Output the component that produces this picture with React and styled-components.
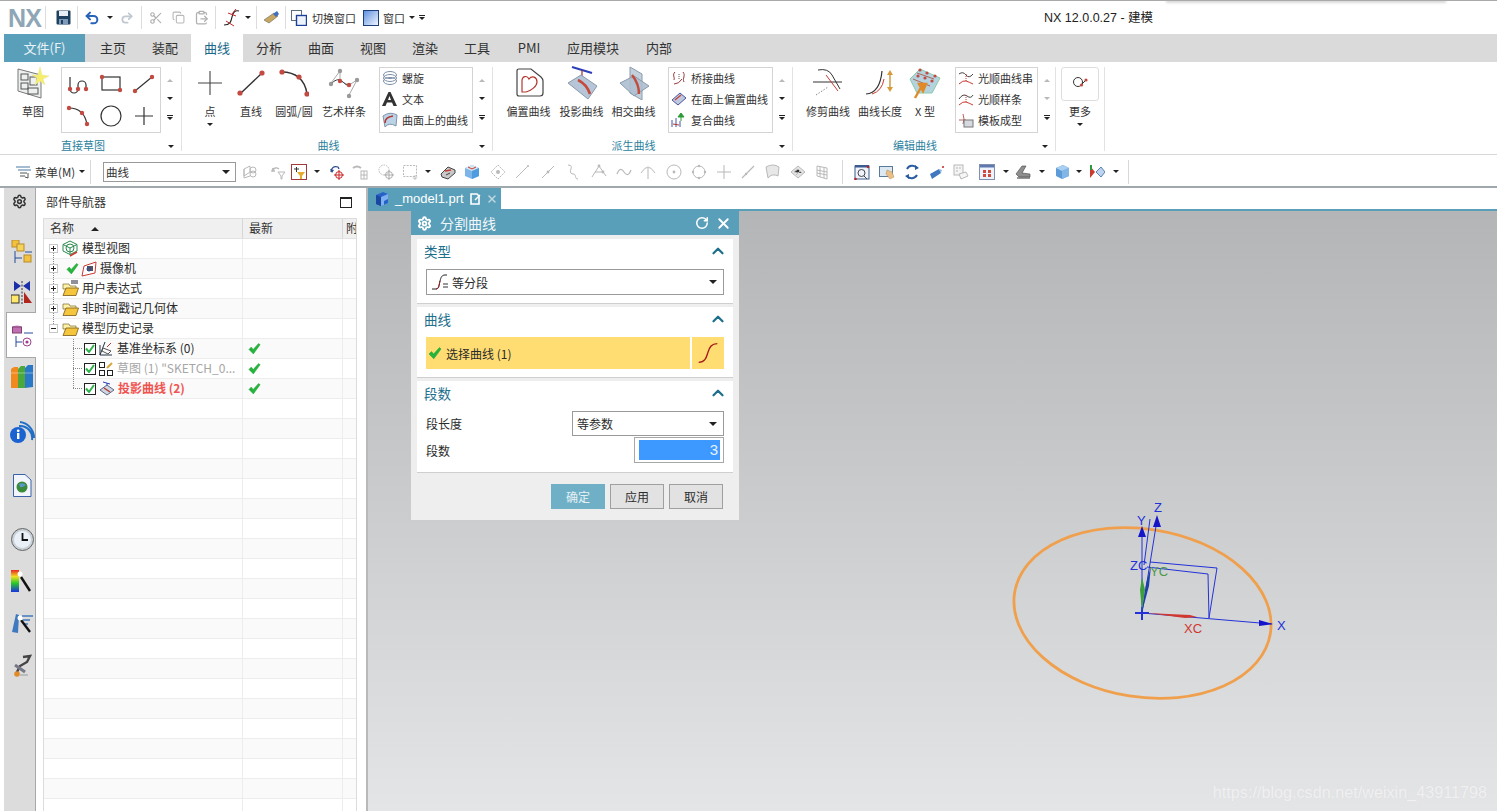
import React from 'react';
import styled, { createGlobalStyle } from 'styled-components';
import { Scissors, Copy, ClipboardPaste, Redo2, Undo2, RotateCw, X, ChevronUp, Settings } from 'lucide-react';

const Global = createGlobalStyle`
  html, body { margin: 0; padding: 0; height: 100%; overflow: hidden; background: #fff; }
  #root { height: 811px; }
  * { box-sizing: border-box; }
  body { font-family: "Noto Sans CJK SC", "Liberation Sans", sans-serif; color: #2b2b2b; font-size: 11px; }
  svg { display: block; flex: none; }
`;

const Page = styled.div`
  width: 1497px; height: 811px; display: flex; flex-direction: column; overflow: hidden;
  border-top: 1px solid #a9a9a9; position: relative;
`;
const TopShadow = styled.div`
  position: absolute; left: 1166px; top: -1px; width: 280px; height: 1px; background: #6a6a6a;
  box-shadow: 0 1px 3px rgba(0,0,0,.45);
`;
const TitleBar = styled.div`height: 33px; display: flex; align-items: center; padding-left: 8px; position: relative;`;
const Logo = styled.div`
  font: bold 25px "Liberation Sans", sans-serif; color: #8fa6b6; width: 37px; letter-spacing: -0.8px; line-height: 32px;
`;
const QSep = styled.div`width: 1px; height: 23px; background: #dcdcdc; margin: 0 ${p => p.$r}px 0 ${p => p.$l}px; flex: none;`;
const QIcon = styled.div`
  width: ${p => p.$w ?? 16}px; height: 18px; display: flex; align-items: center; justify-content: center;
  margin: 0 ${p => p.$mr ?? 0}px 0 ${p => p.$ml ?? 0}px; flex: none;
`;
const Caret = styled.span`
  display: inline-block; flex: none; width: 0; height: 0;
  border-left: 3px solid transparent; border-right: 3px solid transparent; border-top: 3px solid #222;
  margin: 0 ${p => p.$r ?? 0}px 0 ${p => p.$l ?? 0}px;
`;
const DropCaret = styled(Caret)`border-width: 4px 4px 0;`;
const DownCaret = styled(Caret)`margin-top: 5px;`;
const CaretBar = styled.span`
  display: inline-flex; flex: none; flex-direction: column; align-items: center; gap: 1px; margin-left: ${p => p.$l ?? 0}px;
  &::before { content: ""; width: 6px; height: 1px; background: #222; }
  &::after { content: ""; width: 0; height: 0; border-left: 3px solid transparent; border-right: 3px solid transparent; border-top: 3px solid #222; }
`;
const QText = styled.span`font-size: 11px; margin-right: ${p => p.$m ?? 0}px; white-space: nowrap; color: #333;`;
const WinTitle = styled.div`
  position: absolute; left: 1044px; top: 9px; font-size: 12.5px; color: #222; white-space: nowrap; line-height: 16px;
  font-family: "Liberation Sans", "Noto Sans CJK SC", sans-serif;
`;

const TabBar = styled.div`height: 28px; margin-left: 4px; background: #dadada; display: flex; flex: none;`;
const FileTab = styled.div`
  width: 81px; margin-right: 2px; padding-bottom: 2px; background: #5a9fb9; color: #e9f2f6; display: flex; align-items: center; justify-content: center; font-size: 13px;
`;
const Tab = styled.div`
  width: ${p => p.$w ?? 52}px; padding-bottom: 2px; display: flex; align-items: center; justify-content: center; color: ${p => p.$on ? '#17688a' : '#333'};
  background: ${p => p.$on ? '#fff' : 'transparent'}; font-size: 13px;
`;

const Ribbon = styled.div`height: 93px; display: flex; padding-left: 4px; border-bottom: 1px solid #d8d8d8; flex: none;`;
const Group = styled.div`
  width: ${p => p.$w}px; flex: none; display: flex; flex-direction: column; position: relative;
`;
const GroupEnd = styled.div`
  position: absolute; right: 0; top: 5px; bottom: 3px; width: 1px; background: #e2e2e2;
`;
const GroupBody = styled.div`height: 75px; display: flex; padding-top: 5px; padding-left: ${p => p.$pl ?? 0}px;`;
const GroupLabel = styled.div`
  height: 17px; text-align: center; font-size: 11px; color: #2b7f9d; line-height: 16px; padding-right: ${p => p.$pr ?? 0}px;
`;
const Corner = styled(Caret)`position: absolute; right: 8px; bottom: 6px;`;
const Big = styled.div`
  width: ${p => p.$w ?? 52}px; flex: none; display: flex; flex-direction: column; align-items: center; font-size: 11px; white-space: nowrap; color: #333;
`;
const BigIcon = styled.div`height: 32px; width: 100%; display: flex; align-items: center; justify-content: center; margin-bottom: 5px;`;
const BigText = styled.div`line-height: 14px; height: 14px;`;
const Gallery = styled.div`
  width: ${p => p.$w}px; height: 66px; flex: none; border: 1px solid #d4d4d4; margin-left: ${p => p.$ml ?? 0}px;
  padding-bottom: ${p => p.$grid ? 0 : 2}px;
  display: ${p => p.$grid ? 'grid' : 'flex'}; flex-direction: column; grid-template-columns: repeat(3, 1fr); grid-template-rows: 1fr 1fr; place-items: center; justify-content: space-around;
`;
const GalRow = styled.div`
  display: flex; align-items: center; gap: 4px; width: 100%; padding-left: 2px; height: 20px; font-size: 11px; white-space: nowrap; color: #333;
`;
const Spin = styled.div`
  width: 17px; flex: none; height: 66px; display: flex; flex-direction: column; align-items: center; justify-content: space-around; padding: 4px 0 6px;
`;
const CaretUp = styled.span`
  width: 0; height: 0; border-left: 3px solid transparent; border-right: 3px solid transparent; border-bottom: 3px solid #b8b8b8;
`;
const CaretOff = styled(Caret)`border-top-color: #b8b8b8;`;
const MoreBox = styled.div`
  width: 38px; height: 34px; border: 1px solid #dedede; border-radius: 3px; margin: 0 0 3px; display: flex; align-items: center; justify-content: center;
`;
const MoreCol = styled(Big)`width: 48px;`;

const Toolbar = styled.div`
  height: 33px; flex: none; display: flex; align-items: center; padding: 2px 0 0 14px; border-bottom: 2px solid #9fa9ad;
`;
const MenuBtn = styled.div`display: flex; align-items: center; gap: 3px; width: 71px; font-size: 11.5px; color: #333; white-space: nowrap;`;
const TSep = styled.div`width: 1px; height: 24px; background: #d8d8d8; margin: 0 ${p => p.$r ?? 0}px 0 ${p => p.$l ?? 0}px; flex: none;`;
const FilterSelect = styled.div`
  width: 133px; height: 20px; border: 1px solid #9a9a9a; display: flex; align-items: center; justify-content: space-between; padding: 0 5px 0 2px;
  font-size: 11.5px; color: #333; flex: none;
`;
const TIcon = styled.div`width: 16px; height: 18px; flex: none; display: flex; align-items: center; justify-content: center; margin-left: ${p => p.$ml}px; opacity: ${p => p.$off ? .8 : 1};`;
const TCaret = styled(Caret)`margin: 0 0 0 ${p => p.$ml}px;`;

const Main = styled.div`flex: 1; display: flex; min-height: 0;`;
const SideBar = styled.div`
  width: 32px; margin-left: 4px; background: #dcdcdc; border-right: 1px solid #a8a8a8; display: flex; flex-direction: column;
  flex: none;
`;
const SideBtn = styled.div`
  width: 31px; height: ${p => p.$h ?? 36}px; margin-top: ${p => p.$mt ?? 0}px; display: flex; align-items: center; justify-content: center; flex: none;
  padding-left: ${p => p.$pl ?? 5}px;
  ${p => p.$on ? 'background:#fff; border:1px solid #a8a8a8; border-right:0; margin-left: 2px; width: 30px; padding-left: 2px; padding-top: 3px; z-index: 1;' : ''}
`;
const Nav = styled.div`width: 332px; flex: none; display: flex; flex-direction: column; padding: 0 9px 0 7px; border-right: 2px solid #b9b9b9;`;
const NavHead = styled.div`
  height: 30px; flex: none; display: flex; align-items: center; justify-content: space-between; padding: 0 5px 3px 3px; font-size: 12px; color: #333;
`;
const MaxBtn = styled.div`width: 12px; height: 11px; border: 1px solid #222; border-top-width: 2px; margin-top: 2px;`;
const Tree = styled.div`flex: 1; border: 1px solid #dcdcdc; border-bottom: 0; display: flex; flex-direction: column; overflow: hidden;`;
const HeadRow = styled.div`display: grid; flex: none; grid-template-columns: 199px 100px 14px; height: 20px; background: #f0f0f0; border-bottom: 1px solid #e2e2e2; font-size: 12px; color: #333;`;
const HeadCell = styled.div`
  display: flex; align-items: center; padding: 0 0 2px 6px; border-right: 1px solid #d6d6d6; overflow: hidden; gap: 17px; white-space: nowrap;
  &:last-child { border-right: 0; padding-left: 3px; }
`;
const SortUp = styled.span`width: 0; height: 0; border-left: 4px solid transparent; border-right: 4px solid transparent; border-bottom: 4px solid #222; margin-top: 2px;`;
const Row = styled.div`
  display: grid; grid-template-columns: 199px 100px 14px; height: 20px; flex: none; border-bottom: 1px solid #ededed;
  background: ${p => p.$alt ? '#fafafa' : '#fff'};
`;
const Cell = styled.div`
  position: relative; display: flex; align-items: center; border-right: 1px solid #ededed; min-width: 0; padding-left: ${p => p.$pl ?? 0}px;
  white-space: nowrap; font-size: 12px;
  &:last-child { border-right: 0; }
`;
const Expander = styled.span`
  width: 9px; height: 9px; border: 1px solid #c8c8c8; background: #fff; margin: 0 4px 0 5px; position: relative; flex: none; z-index: 1;
  &::before { content: ""; position: absolute; left: 1px; right: 1px; top: 3px; height: 1px; background: #222; }
  &::after { content: ${p => p.$open ? 'none' : '""'}; position: absolute; top: 1px; bottom: 1px; left: 3px; width: 1px; background: #222; }
`;
const VDots = styled.i`
  position: absolute; left: ${p => p.$x}px; top: ${p => p.$t ?? 0}px; bottom: ${p => p.$b ?? 0}px; width: 0; border-left: 1px dotted #888;
`;
const HDots = styled.i`width: 9px; flex: none; border-top: 1px dotted #888; margin-right: 2px; margin-left: 29px;`;
const Box = styled.span`
  width: 12px; height: 12px; border: 1px solid #222; background: #fff; display: flex; align-items: center; justify-content: center; flex: none; margin-right: 3px;
`;
const RowText = styled.span`
  margin: 0 0 2px ${p => p.$ml ?? 3}px; color: ${p => p.$c ?? '#2b2b2b'}; font-weight: ${p => p.$b ? 700 : 400};
`;
const Spacer = styled.span`width: ${p => p.$w}px; flex: none;`;

const Work = styled.div`flex: 1; display: flex; flex-direction: column; position: relative; min-width: 0;`;
const DocStrip = styled.div`height: 23px; display: flex; border-bottom: 2px solid #5a9fb9; flex: none;`;
const DocTab = styled.div`
  width: 133px; height: 21px; background: #5a9fb9; color: #fff; display: flex; align-items: center; padding-left: 6px; gap: 5px;
  font: 13px "Liberation Sans", sans-serif;
`;
const Viewport = styled.div`flex: 1; background: linear-gradient(#b4b5b7 0%, #c4c5c7 35%, #e4e5e7 100%); position: relative;`;
const Drawing = styled.svg`position: absolute; left: 632px; top: 279px;`;
const Watermark = styled.div`
  position: absolute; right: 10px; bottom: 9px; font: 16.2px "Liberation Sans", sans-serif; color: #f0f0f1; white-space: nowrap;
  text-shadow: 0 0 1px #dadadc;
`;

const Dialog = styled.div`
  position: absolute; left: 43px; top: 0; width: 328px; height: 309px; background: #eeeeee; display: flex; flex-direction: column;
`;
const DlgHead = styled.div`
  height: 24px; background: #5a9fb9; color: #fff; display: flex; align-items: center; padding: 0 7px 0 6px; font-size: 14px; gap: 6px; flex: none;
`;
const DlgTitle = styled.span`flex: 1; margin-left: 2px; color: #f2f8fa;`;
const DlgBody = styled.div`flex: 1; padding: 4px 6px 0; display: flex; flex-direction: column; gap: 3px;`;
const Section = styled.div`
  height: ${p => p.$h}px; background: #fff; border-bottom: 1px solid #cfcfcf; padding: 0 9px 0 7px; flex: none;
`;
const SecHead = styled.div`
  height: 26px; margin: 0 -3px 4px 0; padding-bottom: 2px; display: flex; align-items: center; justify-content: space-between; color: #1d6f8d; font-size: 13.5px;
`;
const Combo = styled.div`
  height: ${p => p.$h}px; width: ${p => p.$w ? p.$w + 'px' : 'auto'}; border: 1px solid #9a9a9a; display: flex; align-items: center; justify-content: space-between; padding: 0 6px 0 4px;
  font-size: 12px; color: #2b2b2b; gap: 3px; margin-left: ${p => p.$ml ?? 2}px;
`;
const ComboLabel = styled.span`display: flex; align-items: center; gap: 3px; flex: 1;`;
const SelectBar = styled.div`display: flex; gap: 2px; height: 32px; margin: 0 0 0 2px;`;
const SelectMain = styled.div`flex: 1; background: #ffdd72; display: flex; align-items: center; padding-left: 2px; gap: 4px; font-size: 12px;`;
const SelectIcon = styled.div`width: 32px; background: #ffdd72; display: flex; align-items: center; justify-content: center;`;
const FormRow = styled.div`display: flex; align-items: center; justify-content: space-between; padding-left: 2px; font-size: 12px; height: ${p => p.$h}px; margin-top: ${p => p.$mt ?? 0}px;`;
const NumBox = styled.div`width: 90px; height: 26px; border: 1px solid #a8a8a8; padding: 2px 3px 2px 4px; display: flex;`;
const NumFill = styled.div`flex: 1; background: #3d99ff; color: #e6f2ff; text-align: right; padding-right: 2px; font: 15px/20px "Liberation Sans", sans-serif;`;
const DlgFoot = styled.div`display: flex; justify-content: flex-end; gap: 5px; padding: 8px 10px 0 0;`;
const Btn = styled.div`
  width: 54px; height: 25px; display: flex; align-items: center; justify-content: center; font-size: 12px;
  background: ${p => p.$primary ? '#70b0c7' : '#e2e2e2'}; color: ${p => p.$primary ? '#e6f1f5' : '#2b2b2b'};
  border: ${p => p.$primary ? '0' : '1px solid #a0a0a0'};
`;

const R = '#c24a42', K = '#333';
const Dot = ({ x, y, r = 2.2, c = R }) => <circle cx={x} cy={y} r={r} fill={c} />;
const Tick = ({ s = 14 }) => (
  <svg width={s} height={s} viewBox="0 0 14 14"><path d="M1 8 L3.5 5.5 L5.6 8 L11.5 1.5 L13 3 L5.8 12.8 Z" fill="#24b53c" stroke="#1a9a30" strokeWidth=".5" /></svg>
);
const Sv = ({ s = 16, w, h, v, children, ...rest }) => <svg width={w ?? s} height={h ?? s} viewBox={v ?? `0 0 ${w ?? s} ${h ?? s}`} {...rest}>{children}</svg>;

const Floppy = () => <Sv s={15}><rect x=".5" y=".5" width="14" height="14" rx="1" fill="#20405f" /><rect x="3" y="1" width="9" height="5" fill="#e8eef4" /><rect x="3" y="9" width="9" height="5.5" fill="#7d9ab8" /><rect x="5" y="10" width="2" height="4" fill="#20405f" /></Sv>;
const SplitCurve = () => <Sv s={20}><path d="M2 17 C8 17 9 14 10 9 S13 2 17 3" fill="none" stroke="#222" strokeWidth="1.2" /><path d="M6 5 L14 8 M4 13 L12 18 M14 1 L10 6" stroke="#c62828" strokeWidth="1" /></Sv>;
const Eraser = () => <Sv s={18}><path d="M2 11 L12 4 L16 7 L7 14 Z" fill="#c8a860" stroke="#665" strokeWidth=".6" /><path d="M11 5 L15 2 L17 5 L14 8 Z" fill="#3f6fc0" /></Sv>;
const SwitchWin = () => <Sv s={16}><rect x=".5" y=".5" width="10" height="10" fill="#fff" stroke="#5a6e80" /><rect x="5.5" y="5.5" width="10" height="10" fill="#eef3fb" stroke="#1c3f9a" strokeWidth="1.4" /></Sv>;
const WinIcon = () => <Sv s={16}><defs><linearGradient id="wg" x1="0" y1="0" x2="1" y2="1"><stop offset="0" stopColor="#5b8fe0" /><stop offset="1" stopColor="#f6f9ff" /></linearGradient></defs><rect x=".5" y=".5" width="15" height="15" fill="url(#wg)" stroke="#1c3f7a" /></Sv>;

const SketchI = () => <Sv w={32} h={32}><path d="M1 2 L24 8 L24 31 L1 24 Z" fill="#eef0f0" stroke="#777" /><rect x="4" y="7" width="7" height="6" fill="none" stroke="#555" /><rect x="13" y="10" width="7" height="8" fill="none" stroke="#555" /><rect x="4" y="16" width="7" height="6" fill="none" stroke="#555" /><rect x="11" y="21" width="10" height="6" fill="none" stroke="#555" /><path d="M23 0 L25 8 L32 9 L26 12 L28 18 L23 14 L18 18 L20 11 L15 8 L21 8 Z" fill="#f6ee6a" stroke="#e7e39a" strokeWidth=".5" /></Sv>;
const G1 = () => <Sv w={24} h={22}><path d="M4 4 V16 A4 4 0 0 0 12 16 V12 A4 4 0 0 1 20 12 V16" fill="none" stroke={K} strokeWidth="1.2" /><Dot x={4} y={16} /><Dot x={12} y={16} /><Dot x={20} y={16} /></Sv>;
const G2 = () => <Sv w={24} h={20}><rect x="3" y="3" width="18" height="13" fill="none" stroke={K} strokeWidth="1.2" /><Dot x={3} y={3} /><Dot x={21} y={16} /></Sv>;
const G3 = () => <Sv w={24} h={20}><path d="M3 17 L20 3" stroke={K} strokeWidth="1.2" /><Dot x={3} y={17} /><Dot x={20} y={3} /></Sv>;
const G4 = () => <Sv w={24} h={22}><path d="M3 3 C13 3 19 9 21 19" fill="none" stroke={K} strokeWidth="1.2" /><Dot x={3} y={3} /><Dot x={16} y={8} /><Dot x={21} y={19} /></Sv>;
const G5 = () => <Sv w={24} h={22}><circle cx="12" cy="11" r="10" fill="none" stroke={K} strokeWidth="1.2" /></Sv>;
const G6 = () => <Sv w={20} h={20}><path d="M1 10 H19 M10 1 V19" stroke={K} strokeWidth="1.2" /></Sv>;
const BigPlus = () => <Sv w={24} h={24}><path d="M0 12 H24 M12 0 V24" stroke="#444" strokeWidth="1.1" /></Sv>;
const BigLine = () => <Sv w={28} h={28}><path d="M4 24 L24 5" stroke={K} strokeWidth="1.4" /><Dot x={3} y={24} r={2.6} /><Dot x={25} y={4} r={2.6} /></Sv>;
const BigArc = () => <Sv w={30} h={28}><path d="M3 3 C16 3 26 10 28 25" fill="none" stroke={K} strokeWidth="1.4" /><Dot x={3} y={3} r={2.6} /><Dot x={20} y={8} r={2.6} /><Dot x={28} y={25} r={2.6} /></Sv>;
const BigSpline = () => <Sv w={32} h={32}><path d="M3 16 L12 4 L12 14 L21 18 L29 13 L21 28" fill="none" stroke="#aaa" /><path d="M4 16 C8 12 12 12 14 14 S20 20 22 18" fill="none" stroke={K} /><Dot x={12} y={4} c="#999" /><Dot x={3} y={17} c="#999" /><Dot x={29} y={13} c="#999" /><Dot x={21} y={29} c="#999" /><Dot x={12} y={14} /><Dot x={21} y={18} /></Sv>;
const HelixI = () => <Sv w={16} h={16}><g fill="none" stroke="#7c8fa8"><ellipse cx="8" cy="5" rx="6.5" ry="3.5" /><ellipse cx="8" cy="8" rx="6.5" ry="3.5" /><ellipse cx="8" cy="11" rx="6.5" ry="3.5" /></g></Sv>;
const TextA = () => <Sv w={16} h={16} style={{ overflow: 'visible' }}><path d="M0 15 L6.5 1 H8.5 L15 15 H11.5 L10 11.5 H5 L3.5 15 Z M6 9 H9 L7.5 5 Z" fill="#333" fillRule="evenodd" /></Sv>;
const OnSurface = () => <Sv w={16} h={16}><path d="M1 4 Q8 -1 15 3 L14 14 Q7 10 3 15 Z" fill="#bcd2e6" stroke="#7f95ab" /><path d="M3 11 Q3 5 11 4" fill="none" stroke="#b5362f" strokeWidth="1.6" /></Sv>;
const OffsetC = () => <Sv w={32} h={32}><path d="M4 11 L4 4 Q4 2 6 2 H18 L28 10 Q30 12 30 14 V26 Q30 29 27 29 H6 Q4 29 4 27 Z" fill="none" stroke="#444" strokeWidth="1.2" /><path d="M9 14 C9 9 14 8 16 12 C19 8 24 10 24 15 C24 19 18 24 13 25 H9 Z" fill="none" stroke="#b5362f" strokeWidth="1.2" /></Sv>;
const ProjectC = () => <Sv w={32} h={34}><path d="M6 1 L26 7" stroke="#2b3fb8" strokeWidth="2" /><path d="M16 4 V14" stroke="#a02c2c" strokeWidth="1.2" /><path d="M2 17 L15 9 L31 20 L22 33 Z" fill="#b6c6d8" stroke="#8a9aac" /><path d="M12 14 C18 17 22 22 24 28" fill="none" stroke="#c44a3a" strokeWidth="2.6" /></Sv>;
const IntersectC = () => <Sv w={32} h={34}><path d="M12 1 L24 8 V34 L12 27 Z" fill="#c2d0dc" stroke="#8a9aac" /><path d="M2 17 L16 10 L31 20 L16 30 Z" fill="#aebfd0" fillOpacity=".9" stroke="#8a9aac" /><path d="M14 9 C18 14 21 20 21 28" fill="none" stroke="#c44a3a" strokeWidth="2.4" /></Sv>;
const BridgeI = () => <Sv w={16} h={16}><path d="M4 2 C1 5 4 7 3 10 M12 2 C15 6 11 8 13 12 M3 14 Q8 14 11 9" fill="none" stroke="#9a3a38" /><path d="M8 4 V9" stroke="#555" strokeDasharray="1 1" /></Sv>;
const OnFaceI = () => <Sv w={16} h={16}><path d="M1 9 L9 2 L15 7 L7 14 Z" fill="#c0c8e0" stroke="#4a55a0" /><path d="M4 9 L10 4" stroke="#c44a3a" strokeWidth="1.4" /></Sv>;
const CompI = () => <Sv w={16} h={16}><path d="M1 15 V8 M5 15 V6 M9 15 V9" stroke="#3f57a8" /><path d="M10 9 V3 M7 5 L10 1 L13 5 Z" stroke="#2c9b36" fill="#2c9b36" /><path d="M2 12 L8 13" stroke="#b5362f" /></Sv>;
const TrimI = () => <Sv w={32} h={32}><path d="M1 15 H30" stroke="#333" /><path d="M6 3 Q16 1 20 8 T28 22" fill="none" stroke="#333" /><path d="M14 8 L26 24" stroke="#c93a32" /><path d="M4 28 Q10 24 16 20" fill="none" stroke="#888" strokeDasharray="1.5 1.5" /></Sv>;
const LenI = () => <Sv w={32} h={32}><path d="M2 27 Q16 26 18 4" fill="none" stroke="#333" strokeWidth="1.2" /><path d="M8 27 Q18 24 20 12" fill="none" stroke="#c93a32" /><path d="M26 6 V22" stroke="#c9963a" strokeWidth="1.4" /><path d="M23 8 L26 3 L29 8 Z M23 20 L26 25 L29 20 Z" fill="#d89a3a" /></Sv>;
const XformI = () => <Sv w={32} h={32}><path d="M1 12 L11 2 L31 11 L23 26 L8 26 Z" fill="#b5d2df" stroke="#8ca" /><path d="M8 6 L25 12 M4 12 L21 19" stroke="#b0645a" /><Dot x={11} y={3} r={1.6} /><Dot x={18} y={6} r={1.6} /><Dot x={26} y={9} r={1.6} /><Dot x={9} y={9} r={1.6} /><Dot x={16} y={11} r={1.6} /><Dot x={23} y={14} r={1.6} /><path d="M6 31 L14 17 M10 17 H17 L14 24 Z" stroke="#e08a28" strokeWidth="2.4" fill="#e08a28" /></Sv>;
const SmoothI = ({ v }) => <Sv w={16} h={16}><path d={v ? 'M1 8 Q5 2 9 5 T15 4' : 'M1 4 Q5 1 8 5 T15 4'} fill="none" stroke="#444" /><path d="M1 14 Q5 10 8 11 T15 14" fill="none" stroke="#c93a32" /><path d="M8 4 V11" stroke="#c93a32" strokeDasharray="1 1" /></Sv>;
const TemplI = () => <Sv w={16} h={16}><path d="M1 8 H8 M5 2 Q7 7 5 12" stroke="#b5625a" fill="none" /><rect x="6" y="8" width="9" height="7" fill="#d6dae0" stroke="#777" /></Sv>;
const MoreI = () => <Sv w={18} h={18}><circle cx="7" cy="7" r="4.5" fill="none" stroke="#333" /><path d="M10 10 L15 5" stroke="#333" /><Dot x={10.5} y={10} r={1.6} /><Dot x={15} y={5} r={1.6} /></Sv>;

const MenuI = () => <Sv w={18} h={14}><path d="M2 2 H16 M4 5 H17" stroke="#4a7aa6" strokeWidth="1.2" /><path d="M6 8 H13 M6 11 H11" stroke="#555" /><path d="M14 8 V13 L11 12" fill="none" stroke="#555" /></Sv>;
const gray = '#a8a8a8';
const T = {
  a: <Sv><path d="M2 5 L8 2 V8 L2 12 Z M2 5 V14 L8 12" fill="none" stroke={gray} /><circle cx="11" cy="6" r="3" fill="none" stroke={gray} /><circle cx="11" cy="10" r="3" fill="none" stroke={gray} /></Sv>,
  b: <Sv><path d="M2 7 Q5 2 9 5 M3 4 L2 7 L5 7" fill="none" stroke={gray} strokeWidth="1.4" /><path d="M8 8 H15 L12 12 V15 H11 V12 Z" fill="none" stroke={gray} /></Sv>,
  c: <Sv><rect x=".5" y=".5" width="15" height="15" fill="#fff" stroke="#a33a3a" /><path d="M3 5 H8 M5.5 3 V8" stroke="#333" /><path d="M6 8 H14 L11 12 V15 H9 V12 Z" fill="#e8ac2c" /></Sv>,
  d: <Sv><path d="M2 8 Q3 1 9 3 L10 5" fill="none" stroke="#2c4c8c" strokeWidth="1.3" /><path d="M1 5 L3 9 L5 6Z" fill="#2c4c8c" /><circle cx="10" cy="11" r="3.4" fill="none" stroke="#c22" /><path d="M5 11 H15 M10 6 V16" stroke="#c22" /></Sv>,
  e: <Sv><path d="M1 4 Q5 1 9 4" stroke={gray} strokeWidth="2" fill="none" /><rect x="9" y="7" width="6" height="8" fill="none" stroke={gray} /><path d="M9 11 H15 M12 7 V15" stroke={gray} /></Sv>,
  f: <Sv><circle cx="6" cy="6" r="5" fill="none" stroke={gray} strokeDasharray="1.5 1" /><circle cx="11" cy="11" r="3.5" fill="none" stroke="#999" /><path d="M6 11 H16 M11 6 V16" stroke="#999" /></Sv>,
  g: <Sv><rect x="1.5" y="1.5" width="13" height="11" fill="none" stroke={gray} strokeDasharray="2 1.2" /><path d="M13 11 V15 M11 13.5 L13 15.5 L15 13.5" fill="none" stroke={gray} /></Sv>,
  h: <Sv><path d="M1 10 L8 3 L15 6 L15 9 L8 15 L2 13 Z" fill="#c8c8c8" stroke="#444" /><path d="M5 7 L11 6" stroke="#c93a32" strokeWidth="1.4" /><path d="M6 11 L10 9" stroke="#444" /></Sv>,
  i: <Sv><path d="M1 4 L8 1 L15 4 V12 L8 15 L1 12 Z" fill="#7cb5e8" /><path d="M1 4 L8 7 L15 4 L8 1 Z" fill="#d8e6f0" /><path d="M4 3 L8 5 L12 3" stroke="#c93a32" fill="none" /><path d="M8 7 V15 L15 12 V4 Z" fill="#4f9be0" /></Sv>,
  j: <Sv><path d="M8 1 L15 8 L8 15 L1 8 Z" fill="none" stroke={gray} strokeDasharray="2 1" /><circle cx="8" cy="8" r="2" fill={gray} /></Sv>,
  line: <Sv><path d="M2 14 L14 2" stroke={gray} /><circle cx="14" cy="2" r="1" fill={gray} /></Sv>,
  line2: <Sv><path d="M2 14 L14 2" stroke={gray} /><circle cx="8" cy="8" r="1.4" fill={gray} /></Sv>,
  s: <Sv><path d="M4 1 C12 1 2 9 9 10 C13 10 10 15 14 15" fill="none" stroke={gray} /></Sv>,
  sp: <Sv><path d="M1 13 L8 2 L15 12 M4 8 L12 8" fill="none" stroke={gray} /><circle cx="8" cy="2" r="1.4" fill={gray} /><circle cx="12" cy="8" r="1.4" fill={gray} /></Sv>,
  w: <Sv><path d="M1 10 Q4 2 8 8 T15 6" fill="none" stroke={gray} strokeWidth="1.2" /></Sv>,
  ar: <Sv><path d="M8 4 V15 M1 9 Q5 3 8 3 Q11 3 15 9" fill="none" stroke={gray} /></Sv>,
  ci: <Sv><circle cx="8" cy="8" r="7" fill="none" stroke={gray} /><circle cx="8" cy="8" r="1.4" fill={gray} /></Sv>,
  cq: <Sv><circle cx="8" cy="8" r="6" fill="none" stroke={gray} /><circle cx="8" cy="2" r="1.2" fill={gray} /><circle cx="8" cy="14" r="1.2" fill={gray} /><circle cx="2" cy="8" r="1.2" fill={gray} /><circle cx="14" cy="8" r="1.2" fill={gray} /></Sv>,
  pl: <Sv><path d="M1 8 H15 M8 1 V15" stroke={gray} /></Sv>,
  ln: <Sv><path d="M2 14 L14 2" stroke={gray} strokeWidth="1.2" /><circle cx="6" cy="10" r="1.2" fill={gray} /></Sv>,
  sf: <Sv><path d="M2 3 Q9 -1 15 3 L14 12 Q8 9 4 14 Z" fill="#e2e2e2" stroke={gray} /></Sv>,
  me: <Sv><path d="M1 8 L8 2 L15 8 L8 14 Z" fill="#ddd" stroke={gray} /><path d="M4 8 L8 5 L12 9 M6 11 L10 7" stroke={gray} /></Sv>,
  gr: <Sv><path d="M3 2 L13 4 V15 L3 12 Z M6 3 V13 M10 3.5 V14 M3 6 L13 8 M3 9 L13 11" fill="none" stroke={gray} /></Sv>,
  v1: <Sv><rect x="1" y="2" width="14" height="13" fill="#f0f4f8" stroke="#3a5a90" /><rect x="1" y="1" width="14" height="2.5" fill="#3a5a90" /><circle cx="7.5" cy="9" r="3.5" fill="none" stroke="#445" /><path d="M10 12 L13 15" stroke="#445" /><circle cx="1.5" cy="15" r="1.3" fill="#b22" /><circle cx="14" cy="3" r="1.2" fill="#b22" /></Sv>,
  v2: <Sv><rect x=".5" y="2.5" width="13" height="10" fill="#dce8f2" stroke="#5a7a9a" /><path d="M8 6 L13 8 L15 13 L11 15 L7 10 Z" fill="#e8c088" stroke="#b08a5a" strokeWidth=".5" /></Sv>,
  v3: <Sv><path d="M3 5 A6 6 0 0 1 13 4 M13 11 A6 6 0 0 1 3 12" fill="none" stroke="#2c5ca0" strokeWidth="2" /><path d="M11 1 L15 4 L11 6 Z M5 15 L1 12 L5 10 Z" fill="#2c5ca0" /></Sv>,
  v4: <Sv><path d="M1 10 L10 5 L12 9 L3 15 Z" fill="#3f78c0" /><path d="M10 5 L13 6 L12 9 Z" fill="#8fb8e0" /><circle cx="14" cy="3" r="1" fill="#c22" /></Sv>,
  v5: <Sv><rect x="1" y="1" width="9" height="10" fill="#f2f2f2" stroke={gray} /><path d="M3 4 H5 M3 7 H5 M6 4 H8" stroke={gray} /><path d="M6 10 L13 8 L15 12 L8 15 Z" fill="#f4f4f4" stroke={gray} /></Sv>,
  v6: <Sv><rect x=".5" y=".5" width="15" height="15" fill="#eef2fa" stroke="#7f8fb0" /><rect x="1" y="1" width="14" height="2.5" fill="#5f78b0" /><path d="M4 6 H7 V9 H4 Z M9 6 H12 V9 H9 Z M4 10 H7 V13 H4 Z M9 10 H12 V13 H9 Z" fill="#d04a3c" /></Sv>,
  v7: <Sv><path d="M1 10 L7 2 L11 2 L7 9 L15 10 L15 13 L4 13 Z" fill="#8f8f8f" stroke="#444" strokeWidth=".6" /><path d="M2 14 H15" stroke="#333" /></Sv>,
  v8: <Sv><path d="M2 4 L9 1 L15 4 V12 L8 15 L2 12 Z" fill="#5d9cd8" /><path d="M2 4 L8 7 L15 4 L9 1 Z" fill="#a9d0f0" /><path d="M8 7 V15 L15 12 V4 Z" fill="#82b6e6" /></Sv>,
  v9: <Sv><path d="M7 8 L12 3 L16 8 L12 13 Z" fill="#bcd4f0" stroke="#5a7fb0" /><path d="M1 2 L6 8 L1 14 Z" fill="#cc3a2e" /><path d="M2 1 V6" stroke="#2a9a3a" strokeWidth="2" /></Sv>,
};

const SideIcons = {
  asm: <Sv w={22} h={24}><rect x="1" y="0" width="7" height="7" fill="#f3c23c" stroke="#b8892c" /><rect x="6" y="4" width="7" height="7" fill="#f6d45a" stroke="#b8892c" /><path d="M14 12 H21 M4 11 V23 M4 18 H11" stroke="#234b9a" /><rect x="13" y="15" width="7" height="7" fill="#f3c23c" stroke="#b8892c" /></Sv>,
  con: <Sv w={22} h={24}><path d="M3 0 L10 5 L3 10 Z M19 0 L12 5 L19 10 Z" fill="#1a2fa8" /><path d="M11 0 V24" stroke="#333" strokeDasharray="2 1.5" /><rect x="0" y="14" width="8" height="8" fill="#ffe86a" stroke="#333" /><path d="M13 11 L21 22 H13 Z" fill="#b0251e" /></Sv>,
  part: <Sv w={22} h={24}><ellipse cx="5" cy="2" rx="4.5" ry="1.6" fill="#d080c0" /><rect x=".5" y="2" width="9" height="6" fill="#c070b0" stroke="#804070" /><path d="M12 8 H21 M4 11 V22 M4 17 H10" stroke="#234b9a" /><circle cx="15" cy="17" r="4" fill="none" stroke="#a04090" /><circle cx="15" cy="17" r="1.6" fill="#a04090" /></Sv>,
  lib: <Sv w={24} h={24}><path d="M1 4 L4 2 H8 V23 H1 Z" fill="#f08a1e" /><path d="M8 4 L11 1 H15 V23 H8 Z" fill="#4aa83c" /><path d="M15 3 L18 0 H23 V22 L15 23 Z" fill="#2a78c8" /><path d="M1 8 H23" stroke="#fff" strokeOpacity=".4" /></Sv>,
  info: <Sv w={25} h={24}><path d="M10 6 A12 12 0 0 1 23 20 M11 2 A16 16 0 0 1 25 18" fill="none" stroke="#1f6fc8" strokeWidth="2" transform="translate(-1 0)" /><circle cx="8" cy="15" r="8" fill="#1a62d0" /><rect x="7" y="13" width="2.4" height="6" fill="#fff" /><circle cx="8.2" cy="10.8" r="1.4" fill="#fff" /></Sv>,
  doc: <Sv w={19} h={23}><path d="M.5 .5 H12 L18 6 V22.5 H.5 Z" fill="#f2f6fc" stroke="#3a62a8" /><circle cx="9" cy="13" r="5.5" fill="#3a8a3a" /><path d="M6 10 Q10 8 13 11 Q9 14 7 13 Z" fill="#5a98c8" /></Sv>,
  clock: <Sv w={23} h={23}><circle cx="11.5" cy="11.5" r="11" fill="#c9d0d6" stroke="#666" /><circle cx="11.5" cy="11.5" r="8.5" fill="#eaf0f8" /><path d="M11.5 5 V12 H17" fill="none" stroke="#111" strokeWidth="1.8" /></Sv>,
  grad: <Sv w={22} h={24}><defs><linearGradient id="rb" x1="0" y1="0" x2="0" y2="1"><stop offset="0" stopColor="#e8261e" /><stop offset=".3" stopColor="#f2e020" /><stop offset=".6" stopColor="#28c828" /><stop offset="1" stopColor="#1a30e0" /></linearGradient></defs><rect x="0" y="1" width="8" height="22" fill="url(#rb)" /><path d="M10 8 L19 22" stroke="#111" strokeWidth="2.4" /><circle cx="9" cy="5" r="2.5" fill="#fff" /></Sv>,
  wand: <Sv w={24} h={22}><path d="M2 19 L6 1 L9 2 L8 20 Z" fill="#3f7ac0" /><path d="M12 3 H23 M13 7 H20 M14 11 H18" stroke="#3f7ac0" strokeWidth="1.6" /><path d="M11 7 L20 19" stroke="#111" strokeWidth="2.4" /><circle cx="10" cy="5" r="2.5" fill="#fff" /></Sv>,
  tool: <Sv w={20} h={23}><path d="M11 3 L18 2 L15 8 L8 12 L4 20" stroke="#444" strokeWidth="2.4" fill="none" /><path d="M3 11 L13 18" stroke="#778" strokeWidth="3" /><circle cx="5" cy="20" r="2.8" fill="#e08a28" /><path d="M8 21 H16" stroke="#bbb" strokeWidth="2" /></Sv>,
};

const Cube = () => <Sv w={17} h={17}><g fill="none" stroke="#2a8a4a"><path d="M8 1 L15 4.5 V11 L8 14.5 L1 11 V4.5 Z M1 4.5 L8 8 L15 4.5 M8 8 V14.5" /><circle cx="8" cy="8" r="4" /></g><path d="M8 16 L15 12" stroke="#c93a32" strokeWidth="1.5" /></Sv>;
const Cam = () => <Sv w={16} h={16}><path d="M1 15 L3 5 L15 1 L14 12 Z" fill="#fff" stroke="#c93a32" /><rect x="6" y="5" width="6" height="5" fill="#555" /><circle cx="8" cy="8" r="2" fill="none" stroke="#2a4aa0" /></Sv>;
const Folder = ({ doc }) => <Sv w={17} h={15} style={{ overflow: 'visible' }}><path d="M1 3 H7 L8 5 H14 V8 H1 Z" fill="#fff2a8" stroke="#7a6a2a" strokeWidth=".7" /><path d="M1 14.5 L4 7 H16.5 L14 14.5 Z" fill="#f5c53d" stroke="#7a5a18" strokeWidth=".8" />{doc && <path d="M9 0 H16 M9 2 H16" stroke="#223" />}</Sv>;
const CsysI = () => <Sv w={14} h={14}><path d="M1 13 L6 0 M1 13 L13 13 M1 13 V3" stroke="#234" /><path d="M4 6 L12 9 L9 12 L3 9 Z" fill="none" stroke="#555" /><path d="M8 5 L12 1" stroke="#b5362f" /></Sv>;
const SkI = () => <Sv w={14} h={14}><rect x=".5" y=".5" width="5" height="5" fill="none" stroke="#222" /><rect x=".5" y="8.5" width="5" height="5" fill="none" stroke="#222" /><rect x="8.5" y="8.5" width="5" height="5" fill="none" stroke="#222" /><path d="M8 6 L13 1" stroke="#d9a83a" strokeWidth="2" /></Sv>;
const PrjI = () => <Sv w={16} h={15}><path d="M4 1 L11 3 M8 2 V7" stroke="#2b3fb8" /><path d="M1 9 L8 4 L15 9 L8 14 Z" fill="#cdd6e2" stroke="#5a6a84" /><path d="M5 7 L11 11" stroke="#b5362f" strokeWidth="1.3" /></Sv>;
const DocCube = () => <Sv w={16} h={16}><path d="M2 4 L9 1 L14 3 V12 L7 15 L2 13 Z" fill="#2762c8" /><path d="M7 6 L14 3 V8 L10 10 V14 L7 15 Z" fill="#7cb0f0" /><path d="M2 4 L7 6 V15 L2 13 Z" fill="#1a48a0" /></Sv>;
const Curve = ({ s = 26 }) => <Sv s={26} style={{ width: s, height: s }}><path d="M2 24 C10 24 11 18 13 12 S17 2 24 2" fill="none" stroke="#a01818" strokeWidth="1.6" /></Sv>;
const TypeI = () => <Sv w={18} h={18}><path d="M1 16 H5 C8 16 8 12 9 8 S11 2 14 2 H16" fill="none" stroke="#222" strokeWidth="1" /><path d="M5 16 C8 16 8 12 9 8" fill="none" stroke="#a01818" /><path d="M12 11 H17 M12 14 H17" stroke="#333" /></Sv>;
const SaveBox = () => <svg width="10" height="9" viewBox="0 0 10 9"><path d="M1 4.5 L4 8 L9 1" fill="none" stroke="#2db44a" strokeWidth="2" /></svg>;

const topTools = [['a', 6], ['b', 12], ['c', 5], ['^', 7], ['d', 9], ['e', 7], ['f', 10], ['g', 8], ['^', 7], ['h', 9], ['i', 8], ['j', 10], ['line', 8], ['line2', 10], ['s', 8], ['sp', 11], ['w', 9], ['ar', 8], ['ci', 10], ['cq', 9], ['pl', 9], ['ln', 8], ['sf', 8], ['me', 10], ['gr', 8]];
const viewTools = [['v1', 11], ['v2', 9], ['v3', 9], ['v4', 9], ['v5', 8], ['v6', 10], ['^', 8], ['v7', 6], ['^', 8], ['v8', 9], ['^', 6], ['v9', 7], ['^', 8]];
const offSet = new Set(['a', 'b', 'e', 'f', 'g', 'j', 'line', 'line2', 's', 'sp', 'w', 'ar', 'ci', 'cq', 'pl', 'ln', 'sf', 'me', 'gr', 'v5']);
const ToolList = ({ items }) => items.map(([k, ml], i) =>
  k === '^' ? <TCaret key={i} $ml={ml} /> : <TIcon key={i} $ml={ml} $off={offSet.has(k)}>{T[k]}</TIcon>
);

const App = () => {
  const rows = Array.from({ length: 29 });
  return (
    <>
      <Global />
      <Page>
        <TopShadow />
        <TitleBar>
          <Logo>NX</Logo>
          <QSep $l={0} $r={9} />
          <QIcon><Floppy /></QIcon>
          <QSep $l={6} $r={6} />
          <QIcon><Undo2 size={16} color="#2763b8" strokeWidth={3} /></QIcon>
          <Caret $l={7} $r={4} />
          <QIcon $w={20}><Redo2 size={14} color="#c0c8d0" strokeWidth={3} /></QIcon>
          <QSep $l={4} $r={2} />
          <QIcon $w={23}><Scissors size={14} color="#b0b0b0" /></QIcon>
          <QIcon $w={23}><Copy size={13} color="#b8b8b8" /></QIcon>
          <QIcon $w={23}><ClipboardPaste size={15} color="#b0b0b0" /></QIcon>
          <QSep $l={2} $r={6} />
          <QIcon $w={20}><SplitCurve /></QIcon>
          <Caret $l={3} $r={5} />
          <QSep $l={0} $r={5} />
          <QIcon $w={18}><Eraser /></QIcon>
          <QSep $l={5} $r={5} />
          <QIcon $mr={5}><SwitchWin /></QIcon>
          <QText $m={7}>切换窗口</QText>
          <QIcon $mr={4}><WinIcon /></QIcon>
          <QText>窗口</QText>
          <Caret $l={4} />
          <CaretBar $l={4} />
          <WinTitle>NX 12.0.0.27 - 建模</WinTitle>
        </TitleBar>

        <TabBar>
          <FileTab>文件(F)</FileTab>
          <Tab>主页</Tab>
          <Tab>装配</Tab>
          <Tab $on>曲线</Tab>
          <Tab>分析</Tab>
          <Tab>曲面</Tab>
          <Tab>视图</Tab>
          <Tab>渲染</Tab>
          <Tab>工具</Tab>
          <Tab>PMI</Tab>
          <Tab $w={76}>应用模块</Tab>
          <Tab $w={56}>内部</Tab>
        </TabBar>

        <Ribbon>
          <Group $w={178}>
            <GroupBody $pl={5}>
              <Big $w={48}><BigIcon><SketchI /></BigIcon><BigText>草图</BigText></Big>
              <Gallery $w={100} $ml={4} $grid>
                <G1 /><G2 /><G3 /><G4 /><G5 /><G6 />
              </Gallery>
              <Spin><CaretUp /><Caret /><CaretBar /></Spin>
            </GroupBody>
            <GroupLabel $pr={20}>直接草图</GroupLabel>
            <Corner />
            <GroupEnd />
          </Group>
          <Group $w={311}>
            <GroupBody $pl={3}>
              <Big $w={50}><BigIcon><BigPlus /></BigIcon><BigText>点</BigText><DownCaret /></Big>
              <Big $w={32}><BigIcon><BigLine /></BigIcon><BigText>直线</BigText></Big>
              <Big $w={54}><BigIcon><BigArc /></BigIcon><BigText>圆弧/圆</BigText></Big>
              <Big $w={46}><BigIcon><BigSpline /></BigIcon><BigText>艺术样条</BigText></Big>
              <Gallery $w={94} $ml={12}>
                <GalRow><HelixI />螺旋</GalRow>
                <GalRow><TextA />文本</GalRow>
                <GalRow><OnSurface />曲面上的曲线</GalRow>
              </Gallery>
              <Spin><CaretUp /><Caret /><CaretBar /></Spin>
            </GroupBody>
            <GroupLabel $pr={18}>曲线</GroupLabel>
            <Corner />
            <GroupEnd />
          </Group>
          <Group $w={300}>
            <GroupBody $pl={9}>
              <Big $w={53}><BigIcon><OffsetC /></BigIcon><BigText>偏置曲线</BigText></Big>
              <Big $w={53}><BigIcon><ProjectC /></BigIcon><BigText>投影曲线</BigText></Big>
              <Big $w={51}><BigIcon><IntersectC /></BigIcon><BigText>相交曲线</BigText></Big>
              <Gallery $w={105} $ml={9}>
                <GalRow><BridgeI />桥接曲线</GalRow>
                <GalRow><OnFaceI />在面上偏置曲线</GalRow>
                <GalRow><CompI />复合曲线</GalRow>
              </Gallery>
              <Spin><CaretUp /><Caret /><CaretBar /></Spin>
            </GroupBody>
            <GroupLabel $pr={19}>派生曲线</GroupLabel>
            <Corner />
            <GroupEnd />
          </Group>
          <Group $w={263}>
            <GroupBody $pl={9}>
              <Big $w={52}><BigIcon><TrimI /></BigIcon><BigText>修剪曲线</BigText></Big>
              <Big $w={52}><BigIcon><LenI /></BigIcon><BigText>曲线长度</BigText></Big>
              <Big $w={38}><BigIcon><XformI /></BigIcon><BigText>X 型</BigText></Big>
              <Gallery $w={83} $ml={11}>
                <GalRow><SmoothI />光顺曲线串</GalRow>
                <GalRow><SmoothI v />光顺样条</GalRow>
                <GalRow><TemplI />模板成型</GalRow>
              </Gallery>
              <Spin><CaretUp /><CaretOff /><CaretBar /></Spin>
            </GroupBody>
            <GroupLabel $pr={19}>编辑曲线</GroupLabel>
            <Corner />
            <GroupEnd />
          </Group>
          <Group $w={49}>
            <GroupBody>
              <MoreCol><MoreBox><MoreI /></MoreBox><BigText>更多</BigText><DownCaret /></MoreCol>
            </GroupBody>
            <GroupEnd />
          </Group>
        </Ribbon>

        <Toolbar>
          <MenuBtn><MenuI />菜单(M)<Caret $l={1} /></MenuBtn>
          <TSep $l={5} $r={12} />
          <FilterSelect>曲线<DropCaret /></FilterSelect>
          <ToolList items={topTools} />
          <TSep $l={12} />
          <ToolList items={viewTools} />
          <TSep $l={9} />
        </Toolbar>

        <Main>
          <SideBar>
            <SideBtn $h={26} $pl={0}><Settings size={15} color="#333" strokeWidth={2.4} /></SideBtn>
            <SideBtn $mt={20}>{SideIcons.asm}</SideBtn>
            <SideBtn $mt={5}>{SideIcons.con}</SideBtn>
            <SideBtn $h={46} $mt={1} $on>{SideIcons.part}</SideBtn>
            <SideBtn $mt={1}>{SideIcons.lib}</SideBtn>
            <SideBtn $mt={19}>{SideIcons.info}</SideBtn>
            <SideBtn $mt={17}>{SideIcons.doc}</SideBtn>
            <SideBtn $mt={18}>{SideIcons.clock}</SideBtn>
            <SideBtn $mt={6}>{SideIcons.grad}</SideBtn>
            <SideBtn $mt={7}>{SideIcons.wand}</SideBtn>
            <SideBtn $mt={5}>{SideIcons.tool}</SideBtn>
          </SideBar>
          <Nav>
            <NavHead>部件导航器<MaxBtn /></NavHead>
            <Tree>
              <HeadRow>
                <HeadCell>名称<SortUp /></HeadCell>
                <HeadCell>最新</HeadCell>
                <HeadCell>附</HeadCell>
              </HeadRow>
              <Row>
                <Cell><VDots $x={9} $t={10} /><Expander /><Cube /><RowText $ml={3}>模型视图</RowText></Cell><Cell /><Cell />
              </Row>
              <Row $alt>
                <Cell><VDots $x={9} /><Expander /><Spacer $w={4} /><Tick s={13} /><Spacer $w={2} /><Cam /><RowText>摄像机</RowText></Cell><Cell /><Cell />
              </Row>
              <Row>
                <Cell><VDots $x={9} /><Expander /><Folder doc /><RowText $ml={3}>用户表达式</RowText></Cell><Cell /><Cell />
              </Row>
              <Row $alt>
                <Cell><VDots $x={9} /><Expander /><Folder /><RowText $ml={3}>非时间戳记几何体</RowText></Cell><Cell /><Cell />
              </Row>
              <Row>
                <Cell><VDots $x={9} $b={10} /><Expander $open /><Folder /><RowText $ml={3}>模型历史记录</RowText></Cell><Cell /><Cell />
              </Row>
              <Row $alt>
                <Cell><VDots $x={29} /><HDots /><Box><SaveBox /></Box><CsysI /><RowText $ml={4}>基准坐标系 (0)</RowText></Cell><Cell $pl={5}><Tick s={13} /></Cell><Cell />
              </Row>
              <Row>
                <Cell><VDots $x={29} /><HDots /><Box><SaveBox /></Box><SkI /><RowText $ml={4} $c="#a6a6a6">草图 (1) "SKETCH_0...</RowText></Cell><Cell $pl={5}><Tick s={13} /></Cell><Cell />
              </Row>
              <Row $alt>
                <Cell><VDots $x={29} $b={10} /><HDots /><Box><SaveBox /></Box><PrjI /><RowText $ml={3} $c="#ef5350" $b>投影曲线 (2)</RowText></Cell><Cell $pl={5}><Tick s={13} /></Cell><Cell />
              </Row>
              {rows.map((_, i) => <Row key={i} $alt={i % 2 === 1}><Cell /><Cell /><Cell /></Row>)}
            </Tree>
          </Nav>
          <Work>
            <DocStrip>
              <DocTab><DocCube /><span>_model1.prt</span><svg width="12" height="12" viewBox="0 0 12 12"><path d="M2 1 H8 L10 3 V11 H2 Z" fill="none" stroke="#fff" strokeWidth="1.6" /><path d="M6 7 L11 2" stroke="#fff" strokeWidth="1.4" /></svg><X size={12} color="#c0d8e2" strokeWidth={3} /></DocTab>
            </DocStrip>
            <Viewport>
              <Drawing width="300" height="220" viewBox="0 0 300 220">
                <ellipse cx="142.5" cy="123" rx="129.5" ry="84" transform="rotate(9 142.5 123)" fill="none" stroke="#f0a04c" strokeWidth="2.8" />
                <g fill="none" stroke="#2332d8" strokeWidth="1">
                  <path d="M142 123 L272 134 M142 123 V40 M142 123 L157 30 M144 75 L150 29" />
                  <path d="M150 72 L217 78 L209 128 M147 77 L208 84 L209 128" />
                  <path d="M135 123 H149" strokeWidth="2" />
                  <path d="M142 117 V130" strokeWidth="2" />
                </g>
                <path d="M259 130 L273 134 L259 136 Z M142 36 L146 47 H138 Z M157 25 L161 37 H153 Z" fill="#1414c8" />
                <path d="M142 121 L140 100 L142 87 L145 100 Z" fill="#3e9f3e" />
                <path d="M142 122 L146 94 L151 76 L149 96 Z" fill="#1e40a8" />
                <path d="M147 123 L190 125 L197 127 L185 128 Z" fill="#d03830" />
                <g fontFamily="Liberation Sans, sans-serif" fontSize="13">
                  <text x="277" y="140" fill="#2332d8">X</text>
                  <text x="137" y="35" fill="#2332d8">Y</text>
                  <text x="154" y="22" fill="#2332d8">Z</text>
                  <text x="130" y="80" fill="#2332d8">ZC</text>
                  <text x="150" y="86" fill="#4a9a4a">YC</text>
                  <text x="184" y="143" fill="#d03830">XC</text>
                </g>
              </Drawing>
              <Watermark>https://blog.csdn.net/weixin_43911798</Watermark>
              <Dialog>
                <DlgHead>
                  <Settings size={15} color="#fff" strokeWidth={3} />
                  <DlgTitle>分割曲线</DlgTitle>
                  <RotateCw size={14} color="#fff" strokeWidth={2.6} />
                  <X size={17} color="#fff" strokeWidth={2.6} />
                </DlgHead>
                <DlgBody>
                  <Section $h={65}>
                    <SecHead>类型<ChevronUp size={18} color="#1d6f8d" strokeWidth={3} /></SecHead>
                    <Combo $h={26}><ComboLabel><TypeI />等分段</ComboLabel><DropCaret /></Combo>
                  </Section>
                  <Section $h={71}>
                    <SecHead>曲线<ChevronUp size={18} color="#1d6f8d" strokeWidth={3} /></SecHead>
                    <SelectBar>
                      <SelectMain><Tick s={14} />选择曲线 (1)</SelectMain>
                      <SelectIcon><Curve s={22} /></SelectIcon>
                    </SelectBar>
                  </Section>
                  <Section $h={92}>
                    <SecHead>段数<ChevronUp size={18} color="#1d6f8d" strokeWidth={3} /></SecHead>
                    <FormRow $h={25} $mt={1}>段长度<Combo $h={25} $w={152}>等参数<DropCaret /></Combo></FormRow>
                    <FormRow $h={26} $mt={1}>段数<NumBox><NumFill>3</NumFill></NumBox></FormRow>
                  </Section>
                  <DlgFoot>
                    <Btn $primary>确定</Btn>
                    <Btn>应用</Btn>
                    <Btn>取消</Btn>
                  </DlgFoot>
                </DlgBody>
              </Dialog>
            </Viewport>
          </Work>
        </Main>
      </Page>
    </>
  );
};

export default App;
